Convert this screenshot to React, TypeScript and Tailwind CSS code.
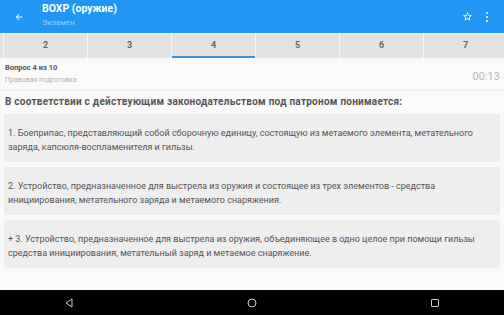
import React from "react";

const tabs = ["2", "3", "4", "5", "6", "7"];

const answers = [
  "1. Боеприпас, представляющий собой сборочную единицу, состоящую из метаемого элемента, метательного заряда, капсюля-воспламенителя и гильзы.",
  "2. Устройство, предназначенное для выстрела из оружия и состоящее из трех элементов - средства инициирования, метательного заряда и метаемого снаряжения.",
  "+ 3. Устройство, предназначенное для выстрела из оружия, объединяющее в одно целое при помощи гильзы средства инициирования, метательный заряд и метаемое снаряжение.",
];

export default function App() {
  return (
    <div
      className="w-[504px] h-[315px] flex flex-col overflow-hidden bg-[#fafafa]"
      style={{ fontFamily: "Roboto, 'Noto Sans', sans-serif" }}
    >
      {/* App bar */}
      <div className="h-[33px] bg-[#2196f3] flex items-center shrink-0">
        <div className="w-[42px] flex justify-center">
          <svg width="10" height="10" viewBox="0 0 24 24" className="ml-[-4px]">
            <path d="M20 11H7.83l5.59-5.59L12 4l-8 8 8 8 1.41-1.41L7.83 13H20v-2z" fill="#fff" />
          </svg>
        </div>
        <div className="flex flex-col flex-1 leading-none">
          <span className="text-white font-bold text-[10.5px] mt-[-2px]">ВОХР (оружие)</span>
          <span className="text-[#9fd0fa] text-[8px] mt-[4px]">Экзамен</span>
        </div>
        <svg width="11" height="11" viewBox="0 0 24 24" className="mr-[13px]">
          <path
            d="M22 9.24l-7.19-.62L12 2 9.19 8.63 2 9.24l5.46 4.73L5.82 21 12 17.27 18.18 21l-1.63-7.03L22 9.24zM12 15.4l-3.76 2.27 1-4.28-3.32-2.88 4.38-.38L12 6.1l1.71 4.04 4.38.38-3.32 2.88 1 4.28L12 15.4z"
            fill="#fff"
          />
        </svg>
        <div className="flex flex-col gap-[2px] mr-[16px]">
          <div className="w-[2px] h-[2px] bg-white rounded-full" />
          <div className="w-[2px] h-[2px] bg-white rounded-full" />
          <div className="w-[2px] h-[2px] bg-white rounded-full" />
        </div>
      </div>

      {/* Tabs */}
      <div className="h-[25px] shrink-0 flex bg-[#e2e2e2] border-t border-[#f2f2f2]">
        <div className="w-[4px] shrink-0 border-r border-[#f7f7f7]" />
        {tabs.map((t) => (
          <div
            key={t}
            className="w-[84px] shrink-0 flex items-center justify-center border-r border-[#f7f7f7] relative text-[9px] font-bold text-[#666]"
          >
            {t}
            {t === "4" && (
              <div className="absolute left-0 right-0 bottom-0 h-[2px] bg-[#3f8fd8]" />
            )}
          </div>
        ))}
      </div>

      {/* Content */}
      <div className="flex-1 flex flex-col">
        <div className="flex items-center justify-between px-[5px] h-[33px] border-b border-[#ececec]">
          <div className="flex flex-col leading-none">
            <span className="text-[7.5px] font-bold text-[#555]">Вопрос 4 из 10</span>
            <span className="text-[7px] text-[#b0b0b0] mt-[5px]">Правовая подготовка</span>
          </div>
          <span className="text-[11px] text-[#b8b8b8] mt-[6px] mr-[-1px]">00:13</span>
        </div>
        <div className="px-[5px] pt-[5px] pb-[6px] text-[10px] tracking-[0.25px] font-bold text-[#555] leading-[12px]">
          В соответствии с действующим законодательством под патроном понимается:
        </div>
        <div className="flex flex-col gap-[5px] px-[4px]">
          {answers.map((a, i) => (
            <div
              key={i}
              className="h-[48px] bg-[#eeeeee] flex items-center pl-[4px] pr-[4px] pt-[4px] text-[9px] leading-[14px] text-[#555]"
            >
              <span>{a}</span>
            </div>
          ))}
        </div>
      </div>

      {/* Nav bar */}
      <div className="h-[25px] bg-black shrink-0 flex items-center">
        <div className="w-[138px] flex justify-center">
          <svg width="10" height="10" viewBox="0 0 10 10">
            <path d="M8 1 L2 5 L8 9 Z" fill="none" stroke="#ccc" strokeWidth="1" strokeLinejoin="round" />
          </svg>
        </div>
        <div className="flex-1 flex justify-center">
          <svg width="10" height="10" viewBox="0 0 10 10">
            <circle cx="5" cy="5" r="4" fill="none" stroke="#ccc" strokeWidth="1" />
          </svg>
        </div>
        <div className="w-[138px] flex justify-center">
          <svg width="10" height="10" viewBox="0 0 10 10">
            <rect x="1.5" y="1.5" width="7" height="7" rx="0.5" fill="none" stroke="#ccc" strokeWidth="1" />
          </svg>
        </div>
      </div>
    </div>
  );
}
